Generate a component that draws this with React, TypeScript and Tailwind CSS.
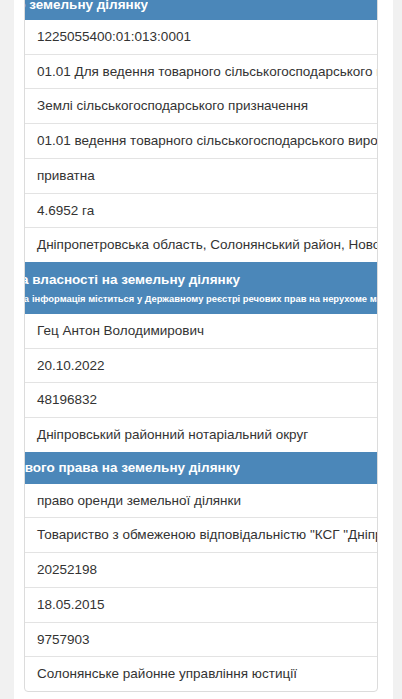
import React from "react";

const font = { fontFamily: '"Liberation Sans", Arial, sans-serif' };

function Row({ children }: { children: React.ReactNode }) {
  return (
    <div className="border-t border-[#e3e3e3] first:border-t-0 px-3 py-2 leading-[17.7px] text-[13.5px] text-[#333] whitespace-nowrap overflow-hidden">
      {children}
    </div>
  );
}

function HeaderTitle({ text, right }: { text: string; right: string }) {
  return (
    <div className="overflow-hidden">
      <div className={`flex justify-end ${right}`}>
        <span className="whitespace-nowrap font-bold text-white text-[13.5px] leading-[20px]">{text}</span>
      </div>
    </div>
  );
}

export default function App() {
  return (
    <div className="w-[402px] h-[699px] overflow-hidden bg-[#f1f1f1] flex" style={font}>
      <div className="ml-[14px] w-[379px] h-full bg-white pl-[10px] pr-[15px] overflow-hidden">
        <div className="-mt-[12px] border border-[#dcdcdc] rounded-b-[4px] overflow-hidden bg-white">
          <div className="bg-[#4b87b9] h-[31px] flex items-center">
            <HeaderTitle text="Відомості про земельну ділянку" right="w-[123px]" />
          </div>
          <div>
            <Row>1225055400:01:013:0001</Row>
            <Row>01.01 Для ведення товарного сільськогосподарського виробництва</Row>
            <Row>Землі сільськогосподарського призначення</Row>
            <Row>01.01 ведення товарного сільськогосподарського виробництва</Row>
            <Row>приватна</Row>
            <Row>4.6952 га</Row>
            <Row>Дніпропетровська область, Солонянський район, Новопокровська сільська рада</Row>
          </div>
          <div className="bg-[#4b87b9] h-[52px] flex flex-col justify-center">
            <HeaderTitle text="Відомості про суб'єкта права власності на земельну ділянку" right="w-[215px]" />
            <div className="flex overflow-hidden mt-[2px]">
              <div className="w-[4px] shrink-0 flex justify-end">
                <span className="whitespace-nowrap font-bold text-white text-[9.4px] leading-[14px]">Дана</span>
              </div>
              <span className="whitespace-nowrap font-bold text-white text-[9.4px] leading-[14px] pl-[3px]">
                інформація міститься у Державному реєстрі речових прав на нерухоме майно
              </span>
            </div>
          </div>
          <div>
            <Row>Гец Антон Володимирович</Row>
            <Row>20.10.2022</Row>
            <Row>48196832</Row>
            <Row>Дніпровський районний нотаріальний округ</Row>
          </div>
          <div className="bg-[#4b87b9] h-[32px] flex items-center">
            <HeaderTitle text="Відомості про суб'єкта іншого речового права на земельну ділянку" right="w-[215px]" />
          </div>
          <div>
            <Row>право оренди земельної ділянки</Row>
            <Row>Товариство з обмеженою відповідальністю "КСГ "Дніпро"</Row>
            <Row>20252198</Row>
            <Row>18.05.2015</Row>
            <Row>9757903</Row>
            <Row>Солонянське районне управління юстиції</Row>
          </div>
        </div>
      </div>
    </div>
  );
}
